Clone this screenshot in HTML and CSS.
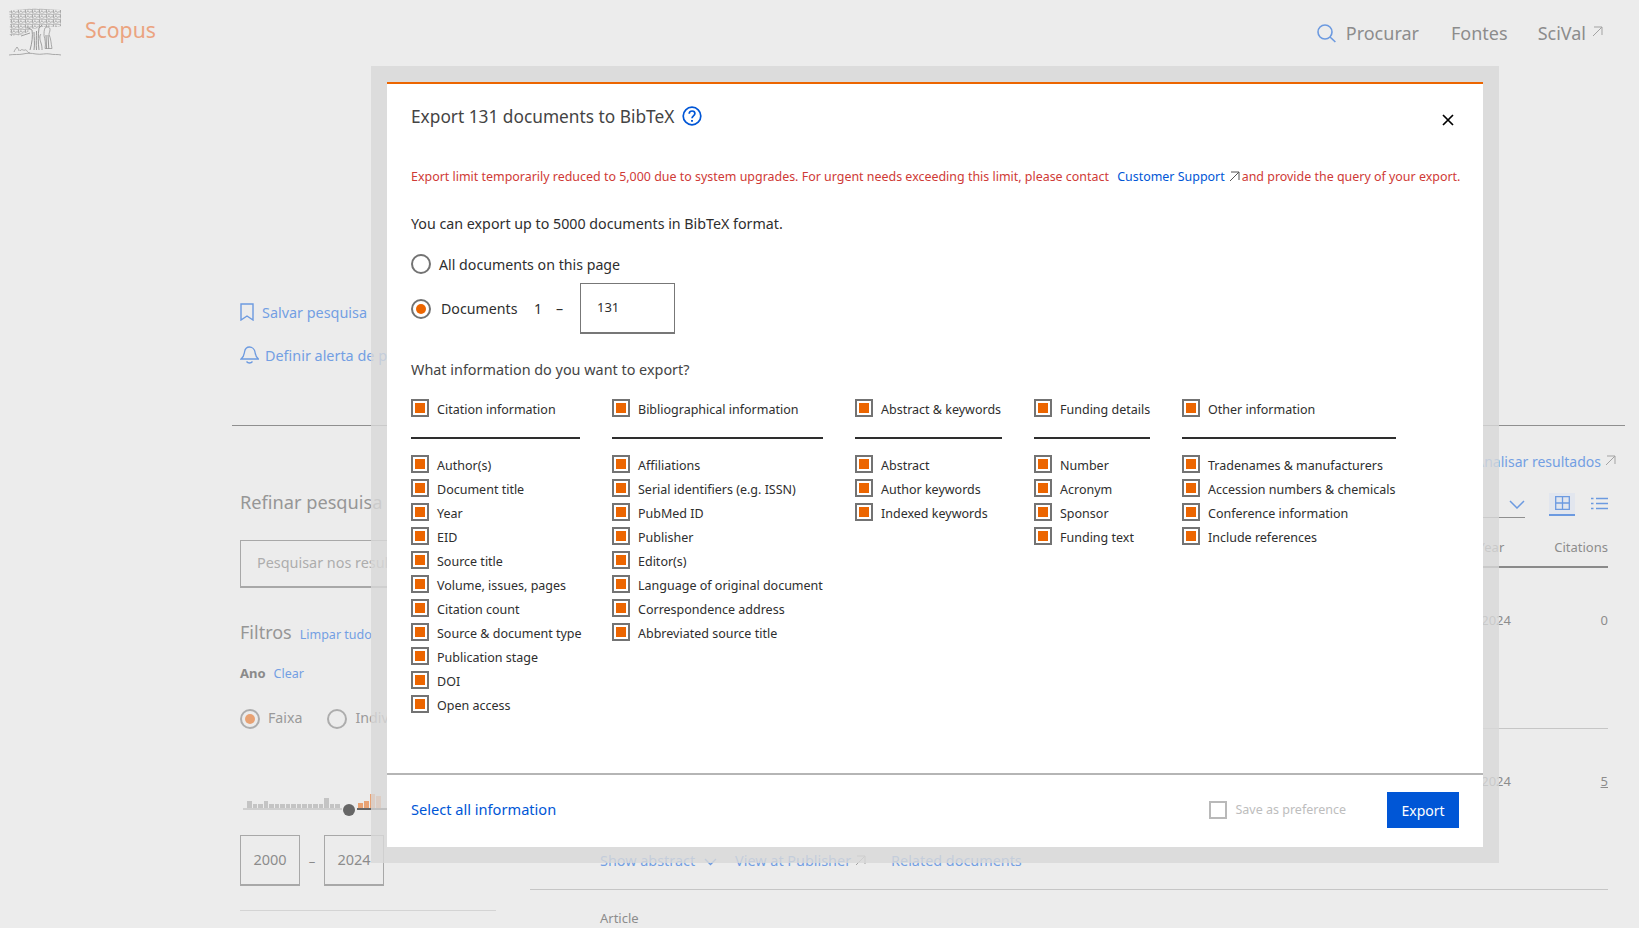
FILE: index.html
```html
<!DOCTYPE html>
<html lang="en">
<head>
<meta charset="utf-8">
<title>Scopus - Export</title>
<link rel="stylesheet" href="styles.css">
</head>
<body>
<div class="page">
  <header class="header">
    <svg class="logo" viewBox="0 0 54 48" fill="none" stroke="#8a8a8a">
      <defs>
        <pattern id="leaf" width="7" height="5" patternUnits="userSpaceOnUse">
          <path d="M0 1.500c1-1.500 2 1 3 0s1.500-1 2 0 1 .5 2 0M0 4c.8 1 1.800-1 2.800 0s1.500 .6 2.200-.3 1.200-.2 2 .3M3.500 1.500v2.500M6 0v1" stroke="#7d7d7d" stroke-width=".7" fill="none"/>
        </pattern>
      </defs>
      <path d="M1 3c6-2 12-1 18-2s18 0 34 1v16c-4 2-8 0-13 1-3 1-5-1-9 1-3 1-5 1-8 1-3 4-10 7-21 7-1-2 1-4 0-7s1-6 0-9 0-6-1-9z" fill="url(#leaf)" stroke="none"/>
      <path d="M24 22c1 6 0 13-2 20M31 20c-1 7-1 14 0 22M26 24c0 6 1 11 0 18M28.500 23c0 6-.5 13 0 19" stroke-width="1"/>
      <path d="M31 20l3-3M24 22l-5-3M22 25l-9 3" stroke-width=".9"/>
      <path d="M37 20c2-2 5-1 5 1.500s-1 3-1 5c2 4 2 9 3 14h-7c1-5 0-9-1-13 0-3 0-5 1-7.500z" stroke-width=".8"/>
      <path d="M38 27l.5 14M40 27l.8 14" stroke-width="1"/>
      <path d="M33 26c-2 2-1 6 0 9s1 5 1 7" stroke-width=".9"/>
      <path d="M6 44c1-3 2-3 3-5 1 2 2 2 2 4M12 43c2-3 3 0 5-1s2 3 5 3M1 47c5-1 10 0 14-1s8-1 13 0 10-1 14 0 7 0 11 1" stroke-width=".8"/>
    </svg>
    <span class="brand">Scopus</span>
    <nav class="nav">
      <a class="nav-search">
        <svg class="nav-icon" viewBox="0 0 19 19" fill="none" stroke="#6c9ae0" stroke-width="1.6"><circle cx="8" cy="8" r="7"/><path d="M13 13l5.400 5"/></svg>
        <span>Procurar</span>
      </a>
      <a class="nav-fontes">Fontes</a>
      <a class="nav-scival">SciVal
        <svg class="ext" viewBox="0 0 11 11" fill="none" stroke="#a3a3a3" stroke-width="1"><path d="M1 10L10 1M2 1h8v8"/></svg>
      </a>
    </nav>
  </header>

  <section class="actions">
    <a class="action">
      <svg class="i-book" viewBox="0 0 14 18" fill="none" stroke="#6c9ae0" stroke-width="1.4"><path d="M1 1h12v16l-6-4-6 4z"/></svg>
      Salvar pesquisa
    </a>
    <a class="action action-alert">
      <svg class="i-bell" viewBox="0 0 19 18" fill="none" stroke="#6c9ae0" stroke-width="1.3"><path d="M1 13c3-2 3-4 3.500-7S7 1 9.500 1 14.500 3 15 6s.5 5 3.500 7zM6.500 15.500c1.500 2 4.500 2 6 0"/></svg>
      Definir alerta de pesquisa
    </a>
  </section>
  <div class="rule"></div>

  <main class="content">
    <aside class="sidebar">
      <h2 class="refine">Refinar pesquisa</h2>
      <div class="search-box">Pesquisar nos resultados</div>
      <div class="filters"><span class="filters-title">Filtros</span><a class="link-sm">Limpar tudo</a></div>
      <div class="year"><b>Ano</b><a class="link-sm">Clear</a></div>
      <div class="range-mode">
        <span class="radio radio-dim on"></span><span class="mode-label">Faixa</span>
        <span class="radio radio-dim mode-two"></span><span class="mode-label">Individual</span>
      </div>
      <div class="hist">
        <div class="hist-grey">
          <i class="tall"></i><i></i><i></i><i class="tall"></i><i></i><i></i><i></i><i></i><i></i><i></i><i></i><i></i><i></i><i></i><i class="tallest"></i><i></i><i></i>
        </div>
        <span class="knob"></span>
        <div class="hist-orange">
          <i class="o5"></i><i class="o6"></i><i class="o14"></i><i class="o12 pale"></i>
        </div>
      </div>
      <div class="years">
        <span class="year-box">2000</span><span class="year-dash">–</span><span class="year-box">2024</span>
      </div>
      <div class="side-end"></div>
    </aside>

    <section class="results">
      <a class="analyse">Analisar resultados
        <svg class="ext ext-lg" viewBox="0 0 11 11" fill="none" stroke="#a3a3a3" stroke-width="1"><path d="M1 10L10 1M2 1h8v8"/></svg>
      </a>
      <div class="view-bar">
        <div class="sort">
          <svg class="chev" viewBox="0 0 16 9" fill="none" stroke="#6c9ae0" stroke-width="1.5"><path d="M1 1l7 7 7-7"/></svg>
        </div>
        <span class="grid-btn">
          <svg class="grid-i" viewBox="0 0 15 14" fill="none" stroke="#6c9ae0" stroke-width="1.3"><path d="M.7.7h13.600v12.600H.7zM7.500.7v12.600M.7 7h13.600"/></svg>
        </span>
        <svg class="list-i" viewBox="0 0 17 13" fill="none" stroke="#6c9ae0" stroke-width="1.3"><path d="M5 1.500h12M5 6.500h12M5 11.500h12M0 1.500h2.500M0 6.500h2.500M0 11.500h2.500"/></svg>
      </div>
      <div class="table-head"><span class="th-year">Year</span><span>Citations</span></div>
      <div class="row row-one"><span class="cell-year">2024</span><span class="cell-cit">0</span></div>
      <div class="row row-two"><span class="cell-year">2024</span><span class="cell-cit"><u>5</u></span></div>
      <div class="doc-links">
        <a>Show abstract</a>
        <svg class="chev-sm" viewBox="0 0 13 8" fill="none" stroke="#6c9ae0" stroke-width="1.4"><path d="M1 1l5.500 5.500L12 1"/></svg>
        <a class="l-pub">View at Publisher</a>
        <svg class="ext" viewBox="0 0 11 11" fill="none" stroke="#a3a3a3" stroke-width="1"><path d="M1 10L10 1M2 1h8v8"/></svg>
        <a class="l-rel">Related documents</a>
      </div>
      <div class="doc-type">Article</div>
    </section>
  </main>
</div>

<div class="dialog-frame">
  <div class="dialog">
    <div class="dialog-body">
      <div class="title-row">
        <h1 class="title">Export 131 documents to BibTeX</h1>
        <svg class="help" viewBox="0 0 20 20" fill="none" stroke="#0056d6" stroke-width="1.700"><circle cx="10" cy="10" r="8.800"/><path d="M7.200 7.800c0-1.800 1.300-2.800 2.900-2.800s2.800 1 2.800 2.500c0 2.300-2.900 2.300-2.900 4.700"/><path d="M10 14v1.700" stroke-width="1.900"/></svg>
        <svg class="close" viewBox="0 0 12 12" fill="none" stroke="#000" stroke-width="1.700"><path d="M1 1l10 10M11 1L1 11"/></svg>
      </div>
      <p class="notice">Export limit temporarily reduced to 5,000 due to system upgrades. For urgent needs exceeding this limit, please contact <a class="notice-link">Customer Support</a><svg class="ext notice-ext" viewBox="0 0 11 11" fill="none" stroke="#555" stroke-width="1"><path d="M1 10L10 1M2 1h8v8"/></svg>and provide the query of your export.</p>
      <p class="lead">You can export up to 5000 documents in BibTeX format.</p>
      <label class="opt opt-all"><span class="radio"></span><span>All documents on this page</span></label>
      <div class="opt opt-range">
        <span class="radio on"></span><span class="opt-docs">Documents</span><span class="opt-one">1</span><span class="opt-dash">–</span>
        <span class="doc-input">131</span>
      </div>
      <p class="question">What information do you want to export?</p>
      <div class="columns">
        <div class="col">
          <div class="item head"><span class="cb"></span>Citation information</div>
          <div class="item"><span class="cb"></span>Author(s)</div>
          <div class="item"><span class="cb"></span>Document title</div>
          <div class="item"><span class="cb"></span>Year</div>
          <div class="item"><span class="cb"></span>EID</div>
          <div class="item"><span class="cb"></span>Source title</div>
          <div class="item"><span class="cb"></span>Volume, issues, pages</div>
          <div class="item"><span class="cb"></span>Citation count</div>
          <div class="item"><span class="cb"></span>Source &amp; document type</div>
          <div class="item"><span class="cb"></span>Publication stage</div>
          <div class="item"><span class="cb"></span>DOI</div>
          <div class="item"><span class="cb"></span>Open access</div>
        </div>
        <div class="col">
          <div class="item head"><span class="cb"></span>Bibliographical information</div>
          <div class="item"><span class="cb"></span>Affiliations</div>
          <div class="item"><span class="cb"></span>Serial identifiers (e.g. ISSN)</div>
          <div class="item"><span class="cb"></span>PubMed ID</div>
          <div class="item"><span class="cb"></span>Publisher</div>
          <div class="item"><span class="cb"></span>Editor(s)</div>
          <div class="item"><span class="cb"></span>Language of original document</div>
          <div class="item"><span class="cb"></span>Correspondence address</div>
          <div class="item"><span class="cb"></span>Abbreviated source title</div>
        </div>
        <div class="col">
          <div class="item head"><span class="cb"></span>Abstract &amp; keywords</div>
          <div class="item"><span class="cb"></span>Abstract</div>
          <div class="item"><span class="cb"></span>Author keywords</div>
          <div class="item"><span class="cb"></span>Indexed keywords</div>
        </div>
        <div class="col">
          <div class="item head"><span class="cb"></span>Funding details</div>
          <div class="item"><span class="cb"></span>Number</div>
          <div class="item"><span class="cb"></span>Acronym</div>
          <div class="item"><span class="cb"></span>Sponsor</div>
          <div class="item"><span class="cb"></span>Funding text</div>
        </div>
        <div class="col">
          <div class="item head"><span class="cb"></span>Other information</div>
          <div class="item"><span class="cb"></span>Tradenames &amp; manufacturers</div>
          <div class="item"><span class="cb"></span>Accession numbers &amp; chemicals</div>
          <div class="item"><span class="cb"></span>Conference information</div>
          <div class="item"><span class="cb"></span>Include references</div>
        </div>
      </div>
    </div>
    <footer class="dialog-foot">
      <a class="select-all">Select all information</a>
      <span class="cb cb-off"></span><span class="save">Save as preference</span>
      <button class="export">Export</button>
    </footer>
  </div>
</div>
</body>
</html>
```
FILE: styles.css
```css
* { box-sizing: border-box; }
html, body { margin: 0; height: 100%; overflow: hidden; }
body { background: #ececec; font-family: "Noto Sans", "Liberation Sans", sans-serif; color: #8a8a8a; }
h1, h2, p { margin: 0; font-weight: 400; }
.page { height: 928px; overflow: hidden; }

.header { height: 66px; display: flex; align-items: flex-start; padding: 8px 36px 0 8px; }
.logo { width: 54px; height: 48px; opacity: .85; flex: none; }
.brand { margin: 7px 0 0 23px; font-size: 21.200px; line-height: 30px; color: #eba37f; }
.nav { margin-left: auto; display: flex; align-items: center; height: 34px; margin-top: 8px; font-size: 18px; color: #8c8c8c; }
.nav a { display: flex; align-items: center; }
.nav-icon { width: 19px; height: 19px; margin-right: 10px; }
.nav-fontes { margin-left: 32px; }
.nav-scival { margin-left: 30px; }
.ext { width: 11px; height: 11px; flex: none; }
.nav-scival .ext { margin-left: 6px; margin-top: -4px; }

.actions { height: 359px; padding: 233px 0 0 240px; font-size: 14.400px; color: #739fe3; }
.action { display: flex; align-items: center; height: 26px; }
.i-book { width: 14px; height: 18px; margin-right: 8px; }
.action-alert { margin-top: 17px; }
.i-bell { width: 19px; height: 18px; margin-right: 6px; }
.rule { height: 1px; background: #8f8f8f; margin: 0 14px 0 232px; }

.content { display: grid; grid-template-columns: 256px 1fr; column-gap: 34px; padding: 0 31px 0 240px; }
.refine { font-size: 18.200px; line-height: 26px; margin-top: 63px; color: #969696; }
.search-box { height: 48px; margin-top: 25px; border: 1px solid #a8a8a8; border-bottom-width: 2px; padding: 0 16px; font-size: 14.400px; line-height: 44px; color: #adadad; white-space: nowrap; overflow: hidden; }
.filters { display: flex; align-items: baseline; margin-top: 31px; }
.filters-title { font-size: 18px; line-height: 26px; color: #969696; }
.link-sm { font-size: 12.500px; color: #739fe3; margin-left: 8px; }
.year { margin-top: 18px; font-size: 12.500px; line-height: 20px; color: #8a8a8a; }
.year b { font-size: 13px; }
.range-mode { display: flex; align-items: center; margin-top: 25px; font-size: 14.200px; color: #9a9a9a; }
.radio { width: 20px; height: 20px; border: 2px solid #737373; border-radius: 50%; flex: none; display: inline-flex; align-items: center; justify-content: center; background: #fff; }
.radio.on::after { content: ""; width: 10px; height: 10px; border-radius: 50%; background: #ec6500; }
.radio-dim { border-color: #adadad; background: transparent; }
.radio-dim.on::after { background: #e8a273; }
.mode-label { margin: -3px 0 0 8px; }
.mode-two { margin-left: 25px; }
.hist { display: flex; align-items: flex-end; height: 16px; margin: 65px 0 0 3px; }
.hist-grey { display: flex; align-items: flex-end; gap: 1px; width: 99px; padding-left: 4px; border-bottom: 2px solid #cfcfcf; flex: none; }
.hist-grey i { display: block; width: 4.500px; height: 4px; background: #c4c4c4; flex: none; }
.hist-grey .tall { height: 7px; }
.hist-grey .tallest { height: 10px; }
.knob { width: 12px; height: 12px; margin: 0 2px -6px 1px; border-radius: 50%; background: #666; flex: none; }
.hist-orange { display: flex; align-items: flex-end; gap: 1px; width: 30px; border-bottom: 2px solid #666; flex: none; }
.hist-orange i { display: block; width: 5px; background: #e8a273; flex: none; }
.hist-orange .o5 { height: 5px; margin-left: 1px; }
.hist-orange .o6 { height: 7px; }
.hist-orange .o14 { height: 14px; }
.hist-orange .o12 { height: 12px; }
.years { display: flex; align-items: center; margin-top: 25px; }
.year-box { width: 60px; height: 51px; border: 1px solid #a8a8a8; border-bottom-width: 2px; font-size: 14.500px; line-height: 47px; text-align: center; color: #8c8c8c; }
.year-dash { width: 24px; text-align: center; font-size: 13px; }
.side-end { height: 1px; background: #d4d4d4; margin-top: 24px; }

.results { display: flex; flex-direction: column; }
.analyse { display: flex; align-items: center; justify-content: flex-end; margin: 26px -8px 0 0; font-size: 14px; line-height: 20px; color: #739fe3; white-space: nowrap; }
.ext-lg { margin-left: 4px; margin-top: -4px; }
.view-bar { display: flex; justify-content: flex-end; align-items: flex-start; margin-top: 21px; height: 24px; }
.sort { width: 400px; height: 25px; border-bottom: 1px solid #8f8f8f; display: flex; justify-content: flex-end; padding-top: 7px; margin-right: 24px; }
.chev { width: 16px; height: 9px; }
.grid-btn { width: 26px; height: 23px; background: #e2e6ee; border-bottom: 2px solid #6c9ae0; display: flex; justify-content: center; padding-top: 3px; }
.grid-i { width: 15px; height: 14px; }
.list-i { width: 17px; height: 13px; margin: 4px 0 0 16px; }
.table-head { display: flex; justify-content: flex-end; align-items: center; gap: 50px; margin-top: 18px; height: 24px; padding-bottom: 7px; border-bottom: 2px solid #8a8a8a; box-sizing: content-box; font-size: 13px; color: #8c8c8c; }
.row { display: grid; grid-template-columns: 1fr auto 97px; font-size: 13px; color: #8c8c8c; }
.cell-year { grid-column: 2; }
.cell-cit { grid-column: 3; text-align: right; }
.row-one { height: 161px; padding-top: 43px; border-bottom: 1px solid #c6c6c6; }
.row-two { height: 118px; padding-top: 43px; }
.doc-links { display: flex; align-items: center; padding-left: 70px; font-size: 14.400px; color: #739fe3; height: 27px; }
.chev-sm { width: 13px; height: 8px; margin: 2px 18px 0 9px; }
.doc-links .ext { margin-left: 4px; }
.l-rel { margin-left: 25px; }
.doc-type { margin-top: 15px; padding: 19px 0 0 70px; border-top: 1px solid #c6c6c6; font-size: 13px; color: #8c8c8c; }

.dialog-frame { position: absolute; left: 371px; top: 66px; width: 1128px; height: 797px; padding: 16px; background: rgba(216,216,216,.8); }
.dialog { height: 765px; background: #fff; border-top: 2px solid #ec6500; display: flex; flex-direction: column; color: #2e2e2e; }
.dialog-body { flex: 1; padding: 0 24px; }
.title-row { position: relative; display: flex; align-items: center; height: 30px; margin-top: 17px; }
.title { font-size: 17.300px; line-height: 30px; margin-top: 2px; color: #444; }
.help { width: 20px; height: 20px; margin: 0 0 0 8px; flex: none; }
.close { position: absolute; left: 1031px; top: 13px; width: 12px; height: 12px; }
.notice { margin-top: 36px; font-size: 12.450px; line-height: 20px; color: #cf3a36; white-space: nowrap; }
.notice-link { color: #0056d6; margin-left: 5px; }
.notice-ext { display: inline-block; margin: 0 2px 0 4px; vertical-align: -1px; }
.lead { margin-top: 27px; font-size: 14.250px; line-height: 20px; color: #2e2e2e; }
.opt { display: flex; align-items: center; font-size: 14.200px; color: #2e2e2e; }
.opt-all { margin-top: 20px; height: 20px; }
.opt-all .radio { margin-right: 8px; }
.opt-range { height: 51px; margin-top: 9px; }
.opt-docs { margin-left: 10px; width: 93px; }
.opt-one { width: 22px; }
.opt-dash { width: 24px; }
.doc-input { width: 95px; height: 51px; border: 1px solid #777; border-bottom-width: 2px; padding: 0 16px; line-height: 47px; font-size: 13px; }
.question { margin-top: 26px; font-size: 14.400px; line-height: 20px; color: #444; }
.columns { display: grid; grid-template-columns: 169px 211px 147px 116px 214px; column-gap: 32px; margin-top: 18px; }
.item { display: flex; align-items: center; height: 24px; padding-top: 2px; font-size: 12.500px; line-height: 22px; color: #2e2e2e; white-space: nowrap; }
.item.head { margin-bottom: 14px; padding-bottom: 17px; border-bottom: 2px solid #2e2e2e; box-sizing: content-box; height: 20px; }
.cb { width: 18px; height: 18px; margin: -5px 8px 0 0; border: 2px solid #737373; padding: 2px; flex: none; display: block; background: #ec6500 content-box; }
.dialog-foot { height: 74px; border-top: 2px solid #b5b5b5; display: flex; align-items: center; padding: 0 24px 2px; }
.select-all { font-size: 14.600px; margin-top: -2px; color: #0056d6; }
.cb-off { margin: 0 8px 0 auto; border-color: #b9b9b9; background: none; padding: 0; }
.save { font-size: 12.500px; margin: -2px 41px 0 0; color: #bdbdbd; }
.export { width: 72px; height: 36px; border: 0; background: #0056d6; color: #fff; font: inherit; font-size: 14px; padding: 0; }
```
